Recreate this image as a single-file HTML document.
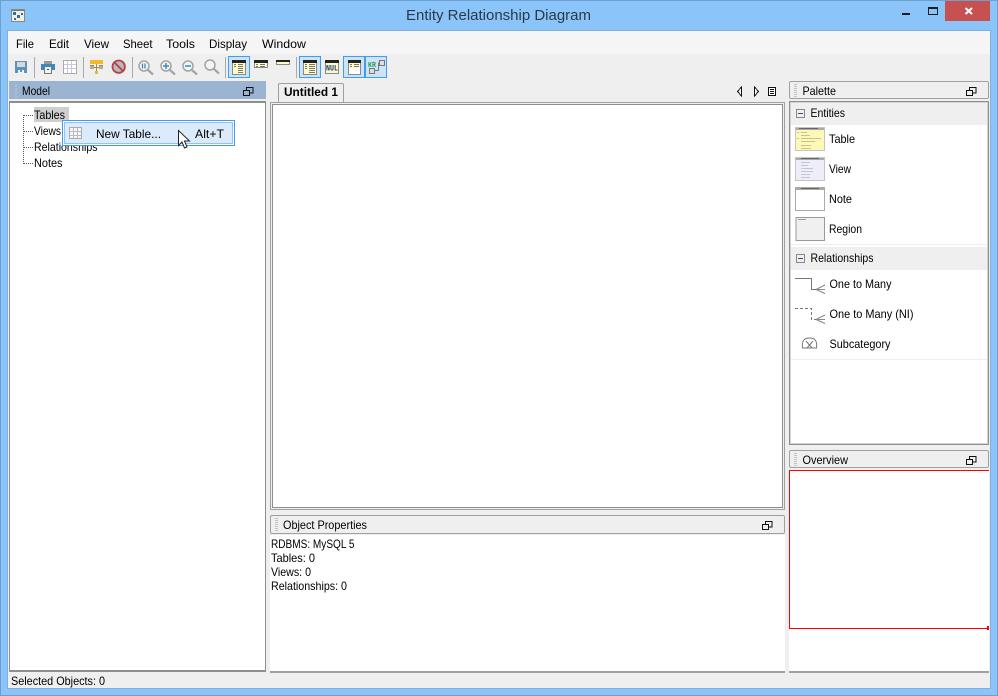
<!DOCTYPE html>
<html><head><meta charset="utf-8"><style>
html,body{margin:0;padding:0}
body{width:998px;height:696px;position:relative;overflow:hidden;background:#8ac4f9;font:12px/14px "Liberation Sans",sans-serif;color:#000}
.a{position:absolute}
svg{position:absolute;left:0;top:0}
svg text{font-family:"Liberation Sans",sans-serif;font-size:12px;fill:#000;stroke:none}
.hdr{position:absolute;background:#efefef;border:1px solid #a0a0a0;border-radius:2px;box-sizing:border-box}
</style></head><body>
<div class="a" style="left:0;top:0;width:996px;height:694px;border:1px solid #6c9fcf"></div>
<div class="a" style="left:945px;top:1px;width:45px;height:20px;background:#c75050"></div>
<div class="a" style="left:8px;top:31px;width:982px;height:657px;background:#efefef;box-shadow:0 0 0 1px #7fb0de"></div>
<div class="a" style="left:8px;top:31px;width:982px;height:23px;background:#f5f5f5"></div>
<div class="a" style="left:9px;top:81px;width:257px;height:18px;background:#9ab4d2"></div>
<div class="a" style="left:9px;top:101px;width:257px;height:571px;box-sizing:border-box;background:#fff;border:1px solid #8e8e8e;border-width:2px 1px"></div>
<div class="a" style="left:278px;top:83px;width:66px;height:20px;box-sizing:border-box;background:#efefef;border:1px solid #a0a0a0;border-bottom:0;border-radius:2px 2px 0 0"></div>
<div class="a" style="left:270px;top:102px;width:515px;height:408px;box-sizing:border-box;background:#fff;border:1px solid #a0a0a0;box-shadow:inset 0 0 0 1px #efefef,inset 0 0 0 2px #8e8e8e"></div>
<div class="hdr" style="left:270px;top:515px;width:515px;height:19px"></div>
<div class="a" style="left:270px;top:535px;width:515px;height:138px;background:#fff;border-bottom:2px solid #a0a0a0;box-sizing:border-box"></div>
<div class="hdr" style="left:789px;top:81px;width:200px;height:18px"></div>
<div class="a" style="left:789px;top:101px;width:200px;height:344px;box-sizing:border-box;background:#fff;border:1px solid #8e8e8e;box-shadow:inset 0 0 0 1px #d4d4d4"></div>
<div class="a" style="left:791px;top:103px;width:196px;height:22px;background:#efefef"></div>
<div class="a" style="left:791px;top:244px;width:196px;height:1px;background:#efefef"></div>
<div class="a" style="left:791px;top:247px;width:196px;height:23px;background:#efefef"></div>
<div class="a" style="left:791px;top:359px;width:196px;height:1px;background:#efefef"></div>
<div class="hdr" style="left:789px;top:450px;width:200px;height:18px"></div>
<div class="a" style="left:789px;top:470px;width:200px;height:203px;background:#fff;border-bottom:2px solid #a0a0a0;box-sizing:border-box"></div>
<div class="a" style="left:789px;top:470px;width:200px;height:159px;box-sizing:border-box;border:1px solid #f00;border-right:0"></div>
<div class="a" style="left:987px;top:626px;width:2px;height:4px;background:#f00"></div>
<div class="a" style="left:34px;top:107px;width:35px;height:15px;background:#cfcfcf"></div>

<svg width="998" height="696" viewBox="0 0 998 696" fill="none" shape-rendering="crispEdges">
<text x="406" y="20" textLength="185" lengthAdjust="spacingAndGlyphs" style="font-size:14.500px;fill:#2b3a4a">Entity Relationship Diagram</text>
<!-- title icon -->
<rect x="11.500" y="9.500" width="13" height="12" fill="#f3efe0" stroke="#888"/><rect x="12" y="10" width="12" height="1" fill="#777"/>
<path d="M13 12h3v3h-3zM17 15h3v3h-3zM21 13h2v2h-2zM14 18h2v2h-2z" fill="#2c6fae"/>
<!-- caption buttons -->
<rect x="902" y="13" width="8" height="2" fill="#1e1e1e"/>
<rect x="928.500" y="7.500" width="9" height="7" stroke="#1e1e1e"/><rect x="928" y="7" width="10" height="2" fill="#1e1e1e"/>
<path d="M965.500 8l6.500 6M972 8l-6.500 6" stroke="#fff" stroke-width="2" shape-rendering="auto"/>
<!-- toolbar separators -->
<path d="M34.500 57v21M83.500 57v21M132.500 57v21M225.500 57v21M296.500 57v21" stroke="#aaa"/>
<!-- save -->
<rect x="15" y="61" width="12" height="12" fill="#5b93bd"/><rect x="17" y="62" width="8" height="5" fill="#d8d8d8"/><rect x="18" y="70" width="6" height="3" fill="#f2f2f2"/><rect x="20" y="70" width="2" height="2" fill="#5b93bd"/>
<!-- print -->
<rect x="44" y="61" width="8" height="3" fill="#9a9a9a"/><rect x="41" y="64" width="14" height="6" fill="#3f87b8"/><rect x="45" y="67" width="6" height="6" fill="#f2f2f2"/><path d="M44.500 67v6.500h7V67" stroke="#777"/><rect x="47" y="69" width="2" height="1" fill="#555"/>
<!-- grid -->
<rect x="63.500" y="60.500" width="13" height="13" fill="#fff" stroke="#aaa"/><path d="M67.500 61v12M71.500 61v12M64 64.500h12M64 68.500h12" stroke="#c8c8e6"/>
<!-- tree -->
<rect x="90" y="60" width="13" height="4" fill="#f3b92d"/><path d="M90 65.500h4M99 65.500h4" stroke="#8a8a8a"/><path d="M96.500 64v7M90 67.500h13" stroke="#a08c50"/><rect x="90" y="66" width="4" height="3" fill="#c2ad70"/><rect x="99" y="66" width="4" height="3" fill="#c2ad70"/><rect x="95" y="71" width="3" height="3" fill="#e7b83b"/>
<g shape-rendering="auto">
<!-- stop -->
<circle cx="118.700" cy="66.700" r="6.200" fill="#b9b9b9" stroke="#b5404f" stroke-width="1.800"/><path d="M114.500 62.500l8.400 8.400" stroke="#b5404f" stroke-width="1.800"/>
<!-- zoom icons -->
<g stroke="#a4a4a4"><circle cx="144" cy="66" r="5" fill="#f0f5f9" stroke-width="1.500"/><path d="M148 70l5 4.500" stroke-width="2.200"/>
<circle cx="166" cy="66" r="5" fill="#f0f5f9" stroke-width="1.500"/><path d="M170 70l5 4.500" stroke-width="2.200"/>
<circle cx="188" cy="66" r="5" fill="#f0f5f9" stroke-width="1.500"/><path d="M192 70l5 4.500" stroke-width="2.200"/>
<circle cx="210" cy="65" r="5" fill="#f4f4f4" stroke-width="1.500"/><path d="M214 69l5 4.500" stroke-width="2.200"/></g>
<path d="M142.500 63.500v5M145 63.500v5" stroke="#3f87b8" stroke-width="1.300"/><path d="M163 66h6M166 63v6M185 66h6" stroke="#3f87b8" stroke-width="1.500"/></g>
<!-- active toggle backgrounds -->
<rect x="228.500" y="56.500" width="21" height="21" fill="#cce4f8" stroke="#3f9cf2"/>
<rect x="299.500" y="56.500" width="21" height="21" fill="#cce4f8" stroke="#3f9cf2"/>
<rect x="343.500" y="56.500" width="21" height="21" fill="#cce4f8" stroke="#3f9cf2"/>
<rect x="365.500" y="56.500" width="21" height="21" fill="#cce4f8" stroke="#3f9cf2"/>
<!-- table icons -->
<rect x="232.500" y="60.500" width="13" height="14" fill="#fffbc8" stroke="#888"/><rect x="232" y="60" width="14" height="3" fill="#222"/><path d="M234 64.500h2M238 64.500h5M234 66.500h2M238 66.500h5M238 68.500h5M238 70.500h5M238 72.500h5" stroke="#777"/>
<rect x="254.500" y="60.500" width="13" height="7" fill="#fffbc8" stroke="#888"/><rect x="254" y="60" width="14" height="3" fill="#222"/><path d="M256 64.500h2M260 64.500h5M256 66.500h2M260 66.500h5" stroke="#777"/>
<rect x="276.500" y="60.500" width="13" height="4" fill="#fffbc8" stroke="#888"/><rect x="276" y="60" width="14" height="2" fill="#222"/>
<rect x="303.500" y="60.500" width="13" height="14" fill="#fffbc8" stroke="#888"/><rect x="303" y="60" width="14" height="3" fill="#222"/><path d="M305 64.500h2M309 64.500h6M305 66.500h2M309 66.500h6M305 68.500h2M309 68.500h6M309 70.500h6M309 72.500h6" stroke="#777"/>
<rect x="325.500" y="60.500" width="13" height="13" fill="#fffbc8" stroke="#888"/><rect x="325" y="60" width="14" height="3" fill="#222"/>
<rect x="348.500" y="60.500" width="12" height="14" fill="#fff" stroke="#888"/><rect x="349" y="61" width="11" height="7" fill="#fffbc8"/><rect x="348" y="60" width="13" height="3" fill="#222"/><path d="M350 64.500h2M354 64.500h5M350 66.500h2M354 66.500h5" stroke="#777"/>
<rect x="379.500" y="60.500" width="5" height="5" fill="#ddd" stroke="#777"/><rect x="369.500" y="68.500" width="5" height="5" fill="#ddd" stroke="#777"/><path d="M375 70.500h3.500V63h1" stroke="#777"/>
<!-- float icons -->
<g stroke="#111"><path d="M246.500 90v-2.500h6.500V93h-3"/><rect x="243.500" y="90.500" width="6" height="5"/>
<path d="M765.500 524v-2.500h6.500V527h-3"/><rect x="762.500" y="524.500" width="6" height="5"/>
<path d="M969.500 90v-2.500h6.500V93h-3"/><rect x="966.500" y="90.500" width="6" height="5"/>
<path d="M969.500 459v-2.500h6.500V462h-3"/><rect x="966.500" y="459.500" width="6" height="5"/></g>
<!-- grips -->
<path d="M15 84.500h2M15 86.500h2M15 88.500h2M15 90.500h2M15 92.500h2M15 94.500h2M15 96.500h2" stroke="#b4c4d8"/>
<path d="M275 518.500h3M275 520.500h3M275 522.500h3M275 524.500h3M275 526.500h3M275 528.500h3M275 530.500h3" stroke="#c4c4c4"/>
<path d="M794 84.500h3M794 86.500h3M794 88.500h3M794 90.500h3M794 92.500h3M794 94.500h3M794 96.500h3" stroke="#c4c4c4"/>
<path d="M794 453.500h3M794 455.500h3M794 457.500h3M794 459.500h3M794 461.500h3M794 463.500h3M794 465.500h3" stroke="#c4c4c4"/>
<!-- tab nav -->
<g stroke="#111" fill="#fff"><path d="M741.500 87v9l-4-4.500z"/><path d="M754.500 87v9l4-4.500z"/><rect x="768.500" y="87.500" width="7" height="8"/></g>
<path d="M770 89.500h4M770 91.500h4M770 93.500h4" stroke="#111"/>
<!-- tree lines -->
<path d="M24 115.500h10M24 131.500h10M24 147.500h10M24 163.500h10M23.500 115v49" stroke="#555" stroke-dasharray="1 1"/>
<!-- palette collapse -->
<rect x="796.500" y="109.500" width="8" height="8" fill="#efefef" stroke="#888"/><path d="M798 113.500h5" stroke="#334c8c"/>
<rect x="796.500" y="254.500" width="8" height="8" fill="#efefef" stroke="#888"/><path d="M798 258.500h5" stroke="#334c8c"/>
<!-- palette table -->
<rect x="795" y="127" width="30" height="24" fill="#fdf8b8"/><rect x="795" y="127" width="30" height="3" fill="#aaa"/><path d="M799 128.500h19" stroke="#666"/>
<path d="M797 132.500h2M801 132.500h6M801 135.500h9M797 138.500h2M801 138.500h20M801 141.500h14M801 145.500h10M801 148.500h10" stroke="#c6c38e"/>
<rect x="795.500" y="127.500" width="29" height="23" stroke="#c4c4c4"/>
<!-- view -->
<rect x="795" y="157" width="30" height="24" fill="#eeeefb"/><rect x="795" y="157" width="30" height="3" fill="#aaa"/><path d="M801 158.500h18" stroke="#666"/>
<path d="M801 162.500h9M801 165.500h7M801 168.500h12M801 171.500h12M801 174.500h9M801 177.500h9" stroke="#c4c4d2"/>
<rect x="795.500" y="157.500" width="29" height="23" stroke="#c4c4c4"/>
<!-- note -->
<rect x="795.500" y="187.500" width="29" height="23" fill="#fff" stroke="#aaa"/><rect x="795" y="187" width="30" height="3" fill="#aaa"/><path d="M801 188.500h18" stroke="#666"/>
<!-- region -->
<rect x="796" y="217.500" width="28.500" height="23" fill="#f0f0f0" stroke="#999"/><path d="M798 219.500h8" stroke="#999"/>
<!-- relations -->
<path d="M795 278.500h16.500V289.500h5" stroke="#777"/><path d="M816 289.500l9-4.500M816 289.500h9M816 289.500l9 4" stroke="#888" shape-rendering="auto"/>
<path d="M795 308.500h16.500V319.500h5" stroke="#777" stroke-dasharray="3 2"/><path d="M816 319.500l9-4.500M816 319.500h9M816 319.500l9 4" stroke="#888" shape-rendering="auto"/>
<g stroke="#777" shape-rendering="auto"><path d="M802.500 348q-1.500-10 7-10t7 10z"/><path d="M806 341l6 7M813 341l-6 7"/></g>

<g>
<text x="16" y="48" textLength="18" lengthAdjust="spacingAndGlyphs">File</text>
<text x="49" y="48" textLength="20" lengthAdjust="spacingAndGlyphs">Edit</text>
<text x="84" y="48" textLength="25" lengthAdjust="spacingAndGlyphs">View</text>
<text x="123" y="48" textLength="29.500" lengthAdjust="spacingAndGlyphs">Sheet</text>
<text x="166" y="48" textLength="29" lengthAdjust="spacingAndGlyphs">Tools</text>
<text x="209" y="48" textLength="38" lengthAdjust="spacingAndGlyphs">Display</text>
<text x="262" y="48" textLength="44" lengthAdjust="spacingAndGlyphs">Window</text>
<text x="326" y="70.500" textLength="12" lengthAdjust="spacingAndGlyphs" style="font:bold 8px 'Liberation Mono',monospace;fill:#1c3f78">NUL</text>
<text x="368" y="67" textLength="8" lengthAdjust="spacingAndGlyphs" style="font:bold 7px 'Liberation Mono',monospace;fill:#2f9a4a">KR</text>
<text x="22" y="95" textLength="28" lengthAdjust="spacingAndGlyphs">Model</text>
<text x="284" y="96" textLength="54" lengthAdjust="spacingAndGlyphs" style="font-weight:bold">Untitled 1</text>
<text x="34" y="119" textLength="31" lengthAdjust="spacingAndGlyphs">Tables</text>
<text x="34" y="135" textLength="27" lengthAdjust="spacingAndGlyphs">Views</text>
<text x="34" y="151" textLength="63.500" lengthAdjust="spacingAndGlyphs">Relationships</text>
<text x="34" y="167" textLength="28.500" lengthAdjust="spacingAndGlyphs">Notes</text>
<text x="283" y="529" textLength="84" lengthAdjust="spacingAndGlyphs">Object Properties</text>
<text x="271" y="548" textLength="83.500" lengthAdjust="spacingAndGlyphs">RDBMS: MySQL 5</text>
<text x="271" y="562" textLength="44" lengthAdjust="spacingAndGlyphs">Tables: 0</text>
<text x="271" y="576" textLength="40" lengthAdjust="spacingAndGlyphs">Views: 0</text>
<text x="271" y="590" textLength="76" lengthAdjust="spacingAndGlyphs">Relationships: 0</text>
<text x="802.500" y="95" textLength="33.500" lengthAdjust="spacingAndGlyphs">Palette</text>
<text x="810.500" y="117" textLength="34.500" lengthAdjust="spacingAndGlyphs">Entities</text>
<text x="829" y="143" textLength="26" lengthAdjust="spacingAndGlyphs">Table</text>
<text x="829" y="173" textLength="22" lengthAdjust="spacingAndGlyphs">View</text>
<text x="829" y="203" textLength="23" lengthAdjust="spacingAndGlyphs">Note</text>
<text x="829" y="233" textLength="33" lengthAdjust="spacingAndGlyphs">Region</text>
<text x="810.500" y="262" textLength="63" lengthAdjust="spacingAndGlyphs">Relationships</text>
<text x="829.500" y="288" textLength="62" lengthAdjust="spacingAndGlyphs">One to Many</text>
<text x="829.500" y="318" textLength="84" lengthAdjust="spacingAndGlyphs">One to Many (NI)</text>
<text x="829.500" y="348" textLength="61" lengthAdjust="spacingAndGlyphs">Subcategory</text>
<text x="802.500" y="464" textLength="45.500" lengthAdjust="spacingAndGlyphs">Overview</text>
<text x="11" y="685" textLength="94" lengthAdjust="spacingAndGlyphs">Selected Objects: 0</text>
</g>
</svg>

<div class="a" style="left:62px;top:120px;width:173px;height:26px;box-sizing:border-box;border:1px solid #3f9cf2;background:#dcebfb;box-shadow:inset 0 0 0 1px #fff,inset 0 0 0 2px #8cc4f8"></div>
<svg width="998" height="696" viewBox="0 0 998 696" fill="none" shape-rendering="crispEdges">
<rect x="69.500" y="127.500" width="12" height="11" fill="#f5f5f5" stroke="#aaa"/><path d="M73.500 128v10M77.500 128v10M70 131.500h11M70 135.500h11" stroke="#bbb"/>
<path d="M178.500 130.500v15l3.500-3.500 2.500 6 2.500-1-2.500-6h5z" fill="#fff" stroke="#222" shape-rendering="auto"/>
<text x="96" y="138" textLength="65" lengthAdjust="spacingAndGlyphs">New Table...</text>
<text x="195" y="138" textLength="29" lengthAdjust="spacingAndGlyphs">Alt+T</text>
</svg>
</body></html>
